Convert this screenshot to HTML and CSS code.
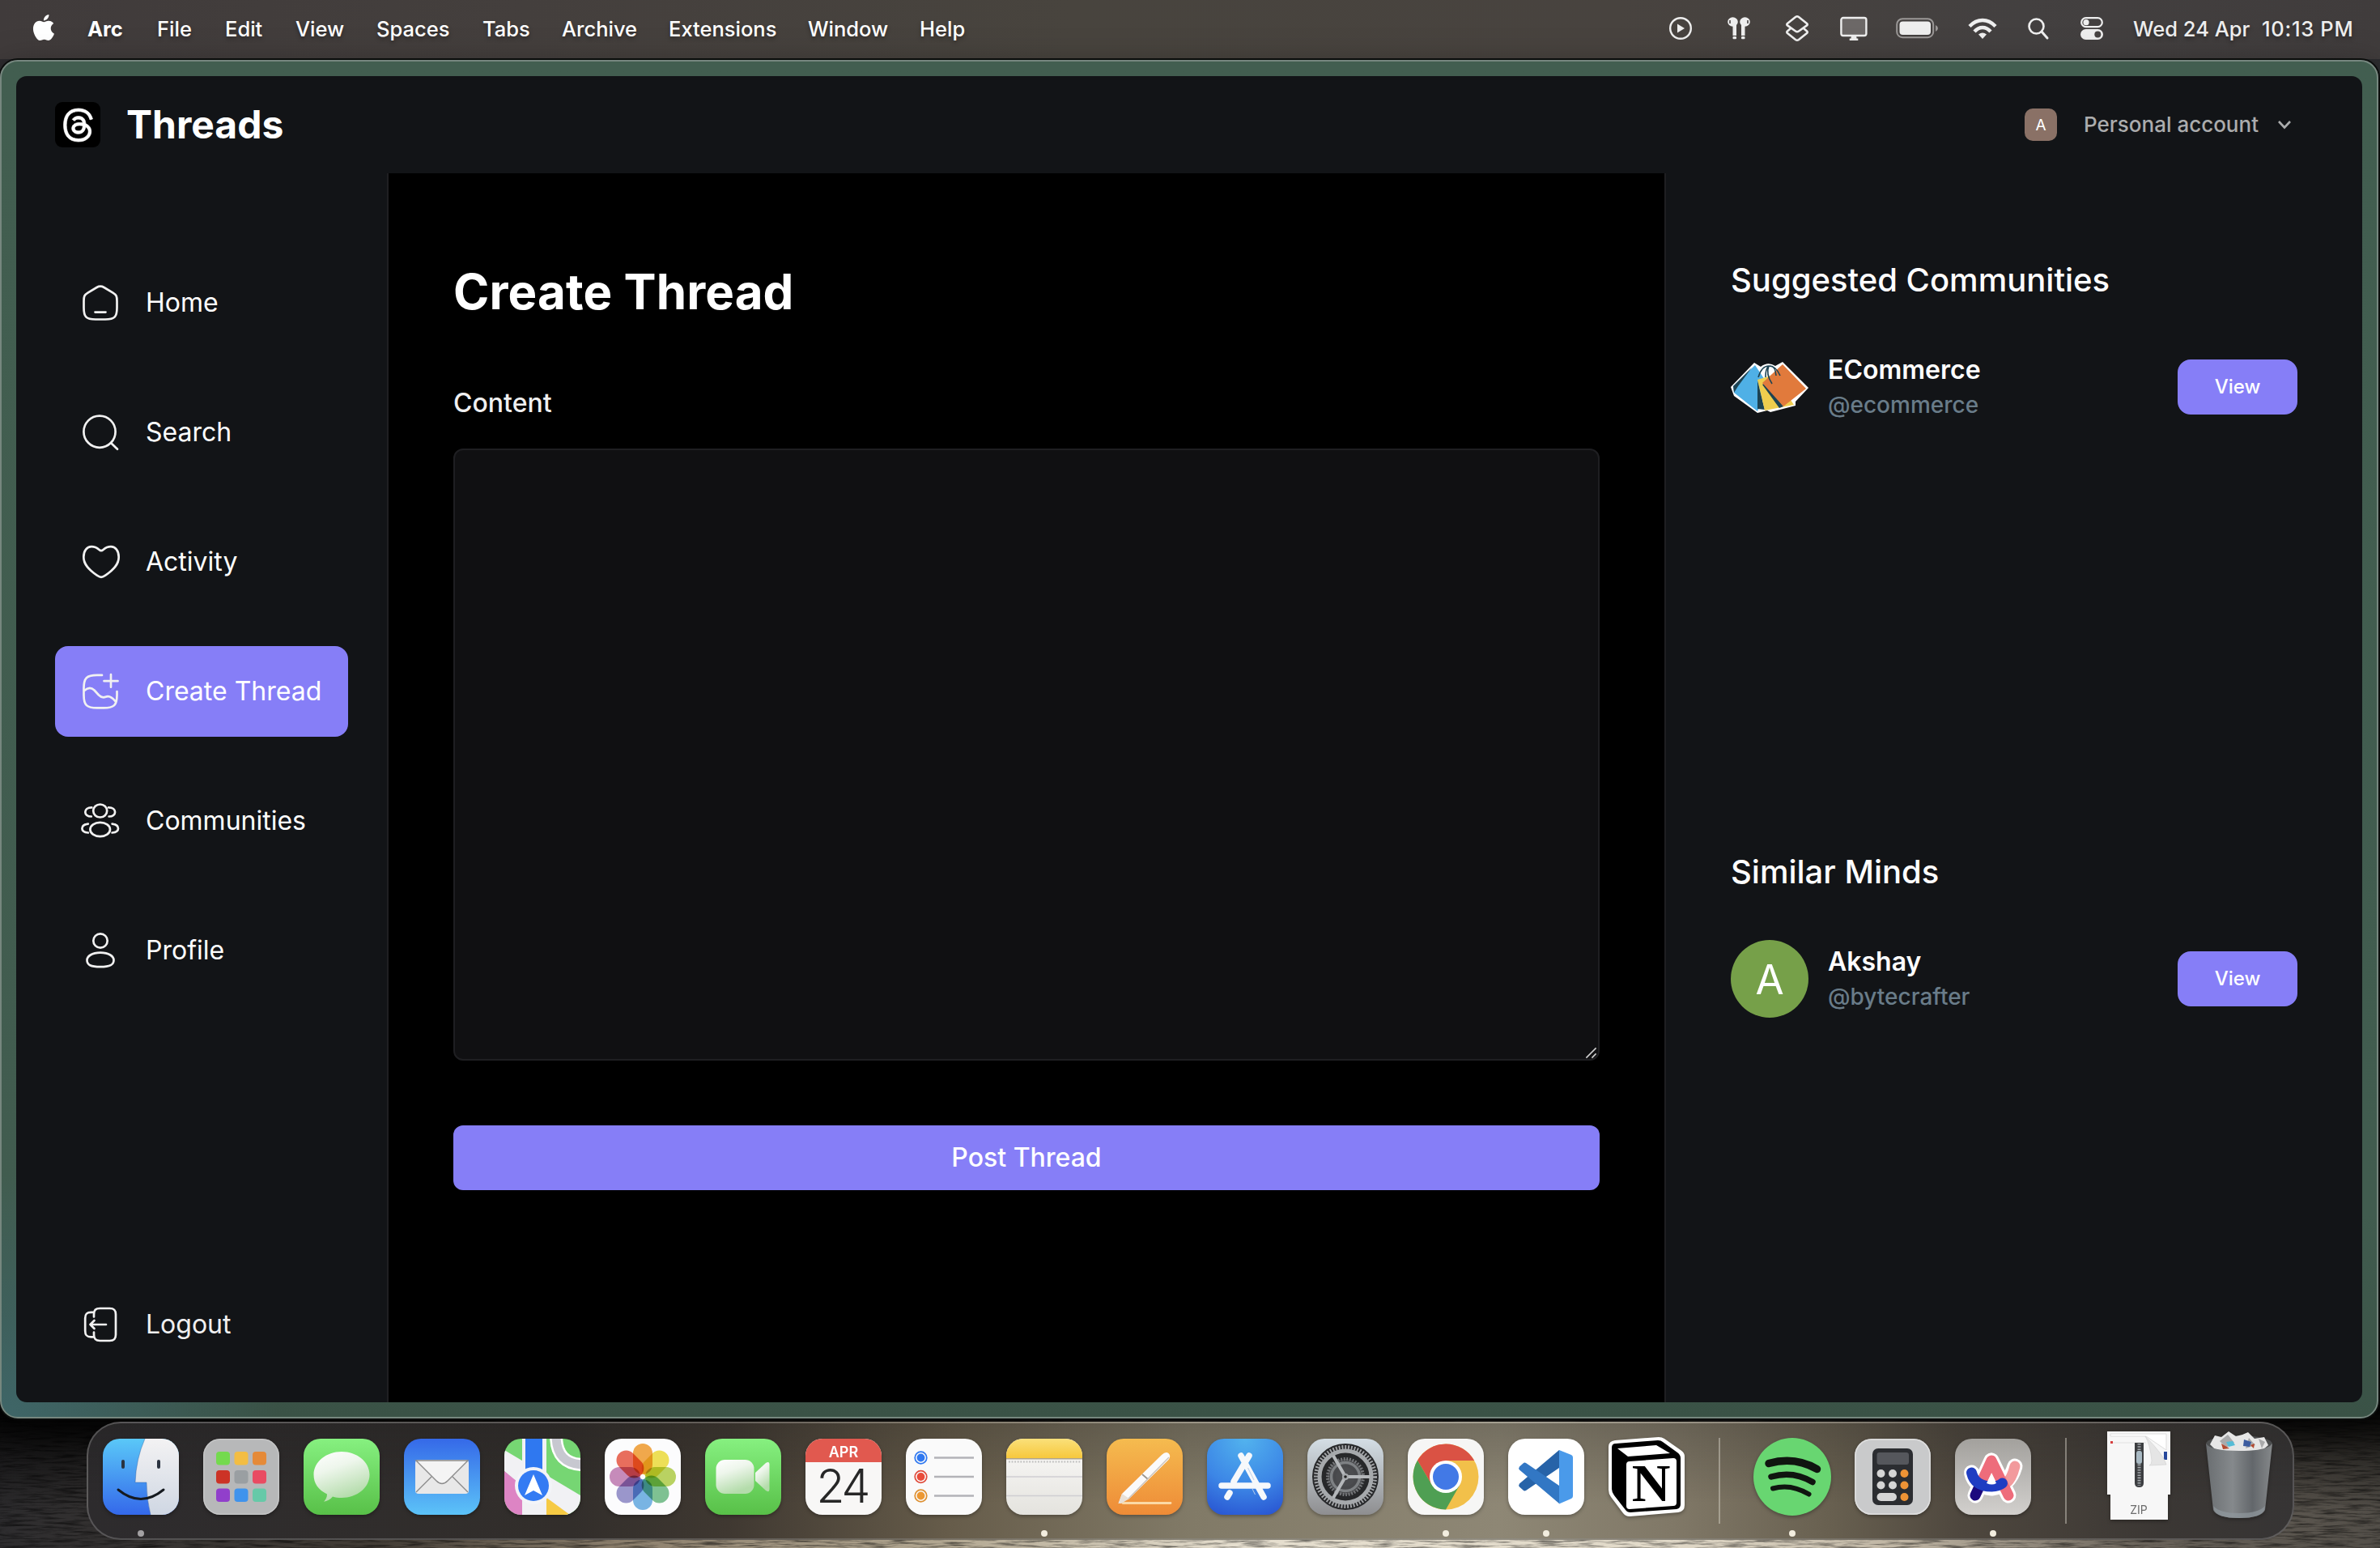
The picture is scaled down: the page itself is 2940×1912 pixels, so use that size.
FILE: index.html
```html
<!DOCTYPE html>
<html lang="en">
<head>
<meta charset="utf-8">
<title>Threads</title>
<link rel="stylesheet" href="styles.css">
</head>
<body>
<div class="desktop">
  <svg class="wallpaper" viewBox="0 0 2940 212" preserveAspectRatio="none">
    <defs>
      <linearGradient id="wood" x1="0" x2="1" y1="0" y2="0">
        <stop offset="0" stop-color="#2d2c2e"/><stop offset=".16" stop-color="#433d36"/><stop offset=".26" stop-color="#8c7f6c"/><stop offset=".4" stop-color="#b3a892"/><stop offset=".52" stop-color="#e6dfcf"/><stop offset=".7" stop-color="#e2dac9"/><stop offset=".8" stop-color="#beb4a2"/><stop offset=".9" stop-color="#6a635a"/><stop offset="1" stop-color="#524e48"/>
      </linearGradient>
      <linearGradient id="woodShade" x1="0" x2="0" y1="0" y2="1">
        <stop offset=".2" stop-color="#000" stop-opacity=".95"/><stop offset=".5" stop-color="#000" stop-opacity=".4"/><stop offset=".8" stop-color="#000" stop-opacity="0"/>
      </linearGradient>
      <filter id="grain" x="0" y="0" width="100%" height="100%">
        <feTurbulence type="fractalNoise" baseFrequency=".03 .35" numOctaves="4" seed="7"/>
        <feColorMatrix values="0 0 0 0 0  0 0 0 0 0  0 0 0 0 0  2.6 0 0 0 -1.1"/>
      </filter>
    </defs>
    <rect width="2940" height="212" fill="url(#wood)"/>
    <rect width="2940" height="212" filter="url(#grain)" opacity=".5"/>
    <rect width="2940" height="212" fill="url(#woodShade)"/>
  </svg>

  <header class="menubar">
    <nav class="menus">
      <svg class="apple" viewBox="0 0 24 24"><path d="M12.152 6.896c-.948 0-2.415-1.078-3.96-1.04-2.04.027-3.91 1.183-4.961 3.014-2.117 3.675-.546 9.103 1.519 12.09 1.013 1.454 2.208 3.09 3.792 3.039 1.52-.065 2.09-.987 3.935-.987 1.831 0 2.35.987 3.96.948 1.637-.026 2.676-1.48 3.676-2.948 1.156-1.688 1.636-3.325 1.662-3.415-.039-.013-3.182-1.221-3.22-4.857-.026-3.04 2.48-4.494 2.597-4.559-1.429-2.09-3.623-2.324-4.39-2.376-2-.156-3.675 1.09-4.61 1.09zM15.53 3.83c.843-1.012 1.4-2.427 1.245-3.83-1.207.052-2.662.805-3.532 1.818-.78.896-1.454 2.338-1.273 3.714 1.338.104 2.715-.688 3.559-1.701"/></svg>
      <span class="app">Arc</span><span>File</span><span>Edit</span><span>View</span><span>Spaces</span><span>Tabs</span><span>Archive</span><span>Extensions</span><span>Window</span><span>Help</span>
    </nav>
    <div class="status">
      <svg class="s-play" viewBox="0 0 30 30"><circle cx="15" cy="15" r="12.8" fill="none" stroke="#eee" stroke-width="2.4"/><path d="M11 9.5v11l9-5.5z" fill="#eee"/></svg>
      <svg class="s-pods" viewBox="0 0 30 30"><g fill="#eee"><ellipse cx="7.5" cy="7" rx="6.3" ry="5.8"/><ellipse cx="22.5" cy="7" rx="6.3" ry="5.8"/><rect x="7.5" y="10" width="4.5" height="14"/><rect x="18" y="10" width="4.5" height="14"/><rect x="7.5" y="25" width="4.5" height="3.2" rx="1"/><rect x="18" y="25" width="4.5" height="3.2" rx="1"/></g><path d="M4 5v4M26 5v4" stroke="#474342" stroke-width="1.6"/></svg>
      <svg class="s-stack" viewBox="0 0 30 34"><g fill="none" stroke="#eee" stroke-width="2.6" stroke-linejoin="round"><path d="M13 3 3 11q-1.400 1.200 0 2.400L13 20.500q2 1.500 4 0l10-7.100q1.400-1.200 0-2.400L17 3q-2-1.500-4 0z"/><path d="M7 17l-4 3.500q-1.400 1.200 0 2.400L13 31q2 1.500 4 0l10-8.100q1.400-1.200 0-2.400L23 17"/></g></svg>
      <svg class="s-display" viewBox="0 0 34 30"><rect x="1.400" y="2" width="31" height="22" rx="2.500" fill="#6c6867" stroke="#eee" stroke-width="2.400"/><path d="M14 24h6l.6 3.500h1.700V30H11.700v-2.500h1.700z" fill="#eee"/></svg>
      <svg class="s-battery" viewBox="0 0 52 26"><rect x="1.200" y="1.200" width="45" height="23" rx="7" fill="none" stroke="#9b9897" stroke-width="2"/><rect x="4.500" y="4.500" width="38.500" height="16.500" rx="4" fill="#eee"/><path d="M49 9q3 1.500 3 4t-3 4z" fill="#9b9897"/></svg>
      <svg class="s-wifi" viewBox="0 0 36 27"><g fill="none" stroke="#eee" stroke-width="4.400"><path d="M2 10.500Q9 3 18 3t16 7.500"/><path d="M8 17q4.500-5 10-5t10 5"/></g><path d="M18 26l-5-5.500q5-4 10 0z" fill="#eee"/></svg>
      <svg class="s-find" viewBox="0 0 26 27"><circle cx="10.500" cy="10.500" r="9" fill="none" stroke="#eee" stroke-width="2.600"/><path d="M17 17l7 8" stroke="#eee" stroke-width="3" stroke-linecap="round"/></svg>
      <svg class="s-cc" viewBox="0 0 28 28"><rect x="1.200" y="1.200" width="25.600" height="11" rx="5.500" fill="none" stroke="#eee" stroke-width="2.200"/><circle cx="7" cy="6.700" r="3.600" fill="#eee"/><rect y="15" width="28" height="13" rx="6.500" fill="#eee"/><circle cx="21.300" cy="21.500" r="4" fill="#474342"/></svg>
      <span class="date">Wed 24 Apr</span><span class="time">10:13 PM</span>
    </div>
  </header>

  <main class="window">
    <div class="page">
      <header class="topbar">
        <div class="brand">
          <span class="logo"><svg viewBox="0 0 24 24"><path d="M12.186 24h-.007c-3.581-.024-6.334-1.205-8.184-3.509C2.35 18.44 1.5 15.586 1.472 12.01v-.017c.03-3.579.879-6.43 2.525-8.482C5.845 1.205 8.6.024 12.18 0h.014c2.746.02 5.043.725 6.826 2.098 1.677 1.29 2.858 3.13 3.509 5.467l-2.04.569c-1.104-3.96-3.898-5.984-8.304-6.015-2.91.022-5.11.936-6.54 2.717C4.307 6.504 3.616 8.914 3.589 12c.027 3.086.718 5.496 2.057 7.164 1.43 1.783 3.631 2.698 6.54 2.717 2.623-.02 4.358-.631 5.8-2.045 1.647-1.613 1.618-3.593 1.09-4.798-.31-.71-.873-1.3-1.634-1.75-.192 1.352-.622 2.446-1.284 3.272-.886 1.102-2.14 1.704-3.73 1.79-1.202.065-2.361-.218-3.259-.801-1.063-.689-1.685-1.74-1.752-2.964-.065-1.19.408-2.285 1.33-3.082.88-.76 2.119-1.207 3.583-1.291a13.853 13.853 0 0 1 3.02.142c-.126-.742-.375-1.332-.75-1.757-.513-.586-1.308-.883-2.359-.89h-.029c-.844 0-1.992.232-2.721 1.32L7.734 7.847c.98-1.454 2.568-2.256 4.478-2.256h.044c3.194.02 5.097 1.975 5.287 5.388.108.046.216.094.321.142 1.49.7 2.58 1.761 3.154 3.07.797 1.82.871 4.79-1.548 7.158-1.85 1.81-4.094 2.628-7.277 2.65Zm1.003-11.69c-.242 0-.487.007-.739.021-1.836.103-2.98.946-2.916 2.143.067 1.256 1.452 1.839 2.784 1.767 1.224-.065 2.818-.543 3.086-3.71a10.5 10.5 0 0 0-2.215-.221z"/></svg></span>
          <span class="brand-name">Threads</span>
        </div>
        <div class="account">
          <span class="account-avatar">A</span>
          <span class="account-name">Personal account</span>
          <svg class="chevron" viewBox="0 0 18 12"><path d="M2 2l7 7.500L16 2"/></svg>
        </div>
      </header>

      <div class="columns">
        <aside class="sidebar">
          <nav class="nav">
            <a class="item"><svg viewBox="0 0 48 48"><path d="M3.500 22c0-6 .5-7.500 5-10.300L19.500 5c3.500-2 5.500-2 9 0l11 6.700c4.500 2.800 5 4.300 5 10.300v8c0 11-2.500 14.500-14.500 14.500H18C6 44.500 3.500 41 3.500 30zM17.500 35.600h13"/></svg><span>Home</span></a>
            <a class="item"><svg viewBox="0 0 48 48"><circle cx="23" cy="23.200" r="19.600"/><path d="M37.500 37.500l7.500 7.200"/></svg><span>Search</span></a>
            <a class="item"><svg class="wide" viewBox="0 0 48 48"><path d="M22.500 9c-3-2.600-6-3.800-9.500-3.800C7.500 5.200 3.300 10 3.300 18c0 9 6 15.500 16.500 22.700 4.200 2.900 6.200 2.900 10.400 0C40.700 33.500 46.700 27 46.700 18c0-8-4.200-12.800-9.700-12.800-3.500 0-6.500 1.200-9.500 3.800-1.900 1.700-3.100 1.700-5 0z"/></svg><span>Activity</span></a>
            <a class="item active"><svg viewBox="0 0 48 48"><path d="M26 3.900h-6C7 3.900 3.500 7.500 3.500 20v8.500C3.500 41 7 44.400 20 44.400h8c13 0 16.500-3.400 16.500-15.900V24M37 3.200v15.500M28.500 11.200h17M4.200 23c4.300-4 8.600-4 12.300-.5l5.500 6c3 3 5 3.800 8.500 2.200 4-1.700 7.500-.2 12 5.500"/></svg><span>Create Thread</span></a>
            <a class="item"><svg viewBox="0 0 48 48"><ellipse cx="23.700" cy="11.500" rx="8.500" ry="8"/><ellipse cx="23.700" cy="34.500" rx="12.300" ry="8.600"/><path d="M13.300 7.300C8 7.300 5.300 10 5.300 13s2.700 5.500 7.500 5.500M34.100 7.300c5.300 0 8 2.700 8 5.700s-2.700 5.500-7.500 5.500M8.800 27.700C4 28.300 1.400 30.500 1.400 33.200s2.600 4.800 7.400 5.300M38.600 27.700c4.800.6 7.400 2.800 7.400 5.500s-2.600 4.800-7.400 5.300"/></svg><span>Communities</span></a>
            <a class="item"><svg viewBox="0 0 48 48"><circle cx="24" cy="12" r="8.700"/><path d="M24 26.700c10.500 0 16.500 4.300 16.500 9.300 0 5.700-4.500 8.200-16.500 8.200S7.500 41.700 7.500 36c0-5 6-9.300 16.500-9.300z"/></svg><span>Profile</span></a>
          </nav>
          <a class="item logout"><svg viewBox="0 0 48 48"><path d="M16 14.500V11.500C16 6 18 4 23.500 4h12c5.500 0 7.500 2 7.500 7.500v25c0 5.500-2 7.500-7.500 7.500h-12C18 44 16 42 16 36.500v-3M16 8.800h-3.500c-5.500 0-7.300 2-7.300 7.500v15.500c0 5.500 1.800 7.500 7.300 7.500H16M31 24H11.500M16.500 19l-5 5 5 5"/></svg><span>Logout</span></a>
        </aside>

        <section class="main">
          <h1>Create Thread</h1>
          <label class="label" for="content">Content</label>
          <div class="field">
            <textarea id="content" class="editor"></textarea>
            <svg class="grip" viewBox="0 0 16 16"><path d="M1.500 14.500l13-13M9 14.500L14.500 9"/></svg>
          </div>
          <button class="post">Post Thread</button>
        </section>

        <aside class="rightbar">
          <section class="suggest">
            <h2>Suggested Communities</h2>
            <div class="card">
              <svg class="avatar" viewBox="0 0 96 96"><path d="M0 48 29 18l8 5q9-7 18-1l9-5 32 32-16 17v5L49 79l-4-2-12 3L4 59z" fill="#fff"/><path d="M3 47 30 21l16 24-13 33L4 55z" fill="#4fb0e6"/><path d="M3 47 26 24 9 47 4 55z" fill="#1d4353"/><path d="M33 40l9 36-9-1z" fill="#1d4353"/><path d="M33 39l20-6 25 37-36 7z" fill="#efce4e"/><path d="M39 45l4-2 22 29-5 2z" fill="#1d4353"/><path d="M39 43 64 20l29 30-28 22z" fill="#e17a3c"/><ellipse cx="47" cy="27" rx="6" ry="5" fill="#fff"/><path d="M34 36q4-14 13-14t14 12M43 36q0-14 6-14t7 12M51 44q-8-12-4-22" fill="none" stroke="#1d4353" stroke-width="1.600"/></svg>
              <div class="who"><strong>ECommerce</strong><span>@ecommerce</span></div>
              <button class="view">View</button>
            </div>
          </section>
          <section class="suggest">
            <h2>Similar Minds</h2>
            <div class="card">
              <span class="avatar letter">A</span>
              <div class="who"><strong>Akshay</strong><span>@bytecrafter</span></div>
              <button class="view">View</button>
            </div>
          </section>
        </aside>
      </div>
    </div>
  </main>

  <footer class="dock">
    <div class="cell running">
      <svg viewBox="0 0 94 94"><defs><linearGradient id="fb" x2="0" y2="1"><stop stop-color="#5ac8f8"/><stop offset="1" stop-color="#3468ea"/></linearGradient><linearGradient id="fw" x2="0" y2="1"><stop stop-color="#f3f2f3"/><stop offset="1" stop-color="#cfd7e3"/></linearGradient><clipPath id="sq"><rect width="94" height="94" rx="21"/></clipPath></defs><g clip-path="url(#sq)"><path d="M0 0h94v94H0z" fill="url(#fb)"/><path d="M52 0Q41 25 40 54h14q0 20 5 40h35V0z" fill="url(#fw)"/><path d="M52 0Q41 25 40 54h14q0 20 5 40" fill="none" stroke="#2b5a9a" stroke-width=".8" opacity=".5"/></g><path d="M25 28v7M69 28v7" stroke="#2a3340" stroke-width="4" stroke-linecap="round"/><path d="M19 63q28 23 56 0" fill="none" stroke="#151a20" stroke-width="3" stroke-linecap="round"/></svg>
    </div>
    <div class="cell">
      <svg viewBox="0 0 94 94"><rect width="94" height="94" rx="21" fill="#b7b8b9"/><rect x=".8" y=".8" width="92.400" height="92.400" rx="20" fill="none" stroke="#cfcfcf" stroke-opacity=".6" stroke-width="1.500"/>
      <g><rect x="16" y="16" width="17" height="16.500" rx="4" fill="#74da4e"/><rect x="38.500" y="16" width="17" height="16.500" rx="4" fill="#f3bd43"/><rect x="61" y="16" width="17" height="16.500" rx="4" fill="#e58a38"/><rect x="16" y="39" width="17" height="16.500" rx="4" fill="#cc3326"/><rect x="38.500" y="39" width="17" height="16.500" rx="4" fill="#9a9fa2"/><rect x="61" y="39" width="17" height="16.500" rx="4" fill="#e94b62"/><rect x="16" y="61.500" width="17" height="16.500" rx="4" fill="#913fcb"/><rect x="38.500" y="61.500" width="17" height="16.500" rx="4" fill="#3f93ec"/><rect x="61" y="61.500" width="17" height="16.500" rx="4" fill="#66c9a8"/></g></svg>
    </div>
    <div class="cell">
      <svg viewBox="0 0 94 94"><defs><linearGradient id="gr" x2="0" y2="1"><stop stop-color="#86f080"/><stop offset="1" stop-color="#58c048"/></linearGradient><linearGradient id="bub" x2=".4" y2="1"><stop stop-color="#fff"/><stop offset=".4" stop-color="#eef6ec"/><stop offset="1" stop-color="#b4dcab"/></linearGradient></defs><rect width="94" height="94" rx="21" fill="url(#gr)"/><path d="M47 16c19 0 34.500 12.500 34.500 28.500S66 73 47 73c-4 0-8-.5-11-1.600-3 3.600-7 5.600-11 6.300 2.600-2.700 4-5.400 4-9.200C18 63 12.500 55 12.500 44.500 12.500 28.500 28 16 47 16z" fill="url(#bub)"/></svg>
    </div>
    <div class="cell">
      <svg viewBox="0 0 94 94"><defs><linearGradient id="ml" x2="0" y2="1"><stop stop-color="#3569e8"/><stop offset="1" stop-color="#5cc3f8"/></linearGradient></defs><rect width="94" height="94" rx="21" fill="url(#ml)"/><rect x="14" y="26" width="66" height="42" rx="4" fill="#e8e8e8"/><path d="M15 66l19-19M79 66L60 47" stroke="#888" stroke-width="1.300"/><path d="M15 27l25 25q7 7 14 0l25-25z" fill="#f4f4f4" stroke="#8b8b8b" stroke-width="1.400"/></svg>
    </div>
    <div class="cell">
      <svg viewBox="0 0 94 94"><g clip-path="url(#sq)"><path d="M0 0h94v94H0z" fill="#76d673"/><path d="M0 14v26l60 54h34V70z" fill="#f1f1f4"/><path d="M0 40l22 18v36H0z" fill="#dd84c4"/><path d="M51 72l30 22H51z" fill="#f6ca44"/><path d="M22 0h30v94H22z" fill="#f1f1f4"/><path d="M26 0h21v50H26z" fill="#2f78f0"/><path d="M64-4q0 36 34 36" fill="none" stroke="#fff" stroke-width="16"/><path d="M64-4q0 36 34 36" fill="none" stroke="#c7c8d0" stroke-width="11"/></g><circle cx="36" cy="58" r="23" fill="#f3f4f8"/><circle cx="36" cy="58" r="19" fill="#347bf3"/><path d="M36 44l11 26-11-6-11 6z" fill="#fff"/></svg>
    </div>
    <div class="cell">
      <svg class="petals" viewBox="0 0 94 94"><rect width="94" height="94" rx="21" fill="#fcfcfd"/><g><rect x="35" y="6" width="24" height="38" rx="12" fill="#f2a33c"/><rect x="35" y="6" width="24" height="38" rx="12" fill="#efe04a" transform="rotate(45 47 47)"/><rect x="35" y="6" width="24" height="38" rx="12" fill="#b5d256" transform="rotate(90 47 47)"/><rect x="35" y="6" width="24" height="38" rx="12" fill="#74bf8a" transform="rotate(135 47 47)"/><rect x="35" y="6" width="24" height="38" rx="12" fill="#6fb0e3" transform="rotate(180 47 47)"/><rect x="35" y="6" width="24" height="38" rx="12" fill="#948fc9" transform="rotate(225 47 47)"/><rect x="35" y="6" width="24" height="38" rx="12" fill="#c583b6" transform="rotate(270 47 47)"/><rect x="35" y="6" width="24" height="38" rx="12" fill="#ea6350" transform="rotate(315 47 47)"/></g></svg>
    </div>
    <div class="cell">
      <svg viewBox="0 0 94 94"><rect width="94" height="94" rx="21" fill="url(#gr)"/><rect x="13.500" y="26" width="47" height="42" rx="11" fill="url(#bub)"/><path d="M62 42l13-12q4.500-3 4.500 2v30q0 5-4.500 2L62 52z" fill="url(#bub)"/></svg>
    </div>
    <div class="cell">
      <svg viewBox="0 0 94 94"><g clip-path="url(#sq)"><path d="M0 0h94v94H0z" fill="#f8f7f6"/><path d="M0 0h94v29H0z" fill="#e1594f"/></g><text x="47" y="22.500" class="cal-month">APR</text><text x="45.500" y="79" class="cal-day">24</text></svg>
    </div>
    <div class="cell">
      <svg viewBox="0 0 94 94"><rect width="94" height="94" rx="21" fill="#fafafa"/><g stroke="#b3b3b8" stroke-width="2.400"><path d="M35 23.500h49M35 47h49M35 70.500h49"/></g><g fill="none" stroke-width="1.700"><circle cx="18.500" cy="23.500" r="7.300" stroke="#2f78f0"/><circle cx="18.500" cy="47" r="7.300" stroke="#e04c3c"/><circle cx="18.500" cy="70.500" r="7.300" stroke="#dd9033"/></g><circle cx="18.500" cy="23.500" r="4.900" fill="#2f78f0"/><circle cx="18.500" cy="47" r="4.900" fill="#e94c3a"/><circle cx="18.500" cy="70.500" r="4.900" fill="#ec9833"/></svg>
    </div>
    <div class="cell running">
      <svg viewBox="0 0 94 94"><defs><linearGradient id="nt" x2="0" y2="1"><stop stop-color="#fae07a"/><stop offset="1" stop-color="#f7c83c"/></linearGradient><linearGradient id="np" x2="0" y2="1"><stop stop-color="#fbfaf9"/><stop offset="1" stop-color="#e4e3de"/></linearGradient></defs><g clip-path="url(#sq)"><path d="M0 0h94v94H0z" fill="url(#np)"/><path d="M0 0h94v24H0z" fill="url(#nt)"/><path d="M0 24.700h94" stroke="#b0a58c" stroke-width="1.500"/><path d="M3 28.500h90" stroke="#bdbdbd" stroke-width="1.800" stroke-dasharray="1.800 1.800"/><path d="M0 47h94M0 70.500h94" stroke="#cfced2" stroke-width="1.600"/></g></svg>
    </div>
    <div class="cell">
      <svg viewBox="0 0 94 94"><defs><linearGradient id="pg" x2="0" y2="1"><stop stop-color="#f5bb4f"/><stop offset="1" stop-color="#ee8b37"/></linearGradient></defs><rect width="94" height="94" rx="21" fill="url(#pg)"/><path d="M20 79.500h59" stroke="#fbd9a6" stroke-width="2.800" stroke-linecap="round"/><path d="M14.500 80L19 68 68 20q5-5 8.500-2t0 8L28 74z" fill="#fbfafa"/><path d="M19 68l9 6-10 6-3.500 0z" fill="#e9e0d6"/><path d="M44 44l7 6" stroke="#9a948c" stroke-width="1.800"/><path d="M77 23L27 74" stroke="#c9c2bb" stroke-width="1.400"/></svg>
    </div>
    <div class="cell">
      <svg viewBox="0 0 94 94"><defs><radialGradient id="as" cx=".5" cy="0" r="1.050"><stop stop-color="#52b3ee"/><stop offset=".6" stop-color="#3c86e6"/><stop offset="1" stop-color="#2a58d3"/></radialGradient></defs><rect width="94" height="94" rx="21" fill="url(#as)"/><g stroke="#f6f8fb" stroke-width="7.500" stroke-linecap="round"><path d="M52 21L33 53M42 21l28 51M28 67l-3 5M18 58h57"/></g><path d="M50.500 36L58 51M56 62l3.500 7" stroke="#b9cfee" stroke-width="1" /></svg>
    </div>
    <div class="cell">
      <svg viewBox="0 0 94 94"><defs><linearGradient id="st" x2="0" y2="1"><stop stop-color="#d4dee5"/><stop offset="1" stop-color="#8e8e90"/></linearGradient></defs><rect width="94" height="94" rx="21" fill="url(#st)"/><circle cx="47" cy="47" r="41" fill="#27282a"/><circle cx="47" cy="47" r="36.500" fill="none" stroke="#a2a4a7" stroke-width="5" stroke-dasharray="1.900 1.900"/><circle cx="47" cy="47" r="32" fill="none" stroke="#a6a9ac" stroke-width="5"/><circle cx="47" cy="47" r="22" fill="#48494c" stroke="#77797c" stroke-width="4" stroke-dasharray="1.800 1.800"/><circle cx="47" cy="47" r="17.500" fill="none" stroke="#7d8083" stroke-width="3.500"/><circle cx="47" cy="47" r="12" fill="#4b4c4f"/><path d="M47 47h30M47 47L32 21M47 47L32 73" stroke="#b4b7ba" stroke-width="4"/><circle cx="47" cy="47" r="4" fill="#a6a9ac"/><circle cx="47" cy="47" r="1.800" fill="#222"/></svg>
    </div>
    <div class="cell running">
      <svg viewBox="0 0 94 94"><rect width="94" height="94" rx="21" fill="#f6f6f5"/><circle cx="47" cy="47" r="40.500" fill="#f2c04a"/><path d="M47 27h35.200A40.500 40.500 0 0 0 12 26.700L29.700 57z" fill="#da5244"/><path d="M12 26.700A40.500 40.500 0 0 0 47 87.500L64.300 57 29.700 57z" fill="#4f9f53"/><circle cx="47" cy="47" r="20" fill="#fff"/><circle cx="47" cy="47" r="16" fill="#4279e6"/></svg>
    </div>
    <div class="cell running">
      <svg viewBox="0 0 94 94"><rect width="94" height="94" rx="21" fill="#fff"/><path d="M63 14v22L22 64q-2 1-3.500-.5l-4.500-4q-1.500-2 0-4z" fill="#2763a8"/><path d="M63 80V58L22 30q-2-1-3.500.5l-4.500 4q-1.500 2 0 4z" fill="#3277c4"/><path d="M63 14l15 6q2 1 2 3v48q0 2-2 3l-15 6.500z" fill="#4a9aea"/></svg>
    </div>
    <div class="cell">
      <svg class="notion" viewBox="0 0 94 98"><path d="M8 4L62 0q4 0 7 2l20 14q5 3 5 8v60q0 8-8 9L26 98q-5 0-8-4L3 74q-3-4-3-9V12q0-7 8-8z" fill="#fff"/><path d="M9 8l52-4q4 0 6 2l18 13q4 3 4 7v57q0 5-5 6l-57 4q-4 0-6-3L7 72q-3-4-3-8V13q0-5 5-5z" fill="#000"/><path d="M11 14l48-4 17 10-52 4z" fill="#fff"/><path d="M26 30l54-4q4 0 4 4v51q0 4-4 4l-54 4q-4 0-4-4V34q0-4 4-4z" fill="#fff"/><text x="52.500" y="78.500" class="n-letter">N</text></svg>
    </div>
    <div class="divider"></div>
    <div class="cell running">
      <svg class="spotify" viewBox="0 0 96 96"><circle cx="48" cy="48" r="48" fill="#68d671"/><g fill="none" stroke="#101510" stroke-linecap="round"><path d="M19 31.500q32-9 59.500 7" stroke-width="9.500"/><path d="M22 48q27-8 51 6.500" stroke-width="7.500"/><path d="M24 62.500q22-6.500 44.500 7" stroke-width="6"/></g></svg>
    </div>
    <div class="cell">
      <svg viewBox="0 0 94 94"><rect width="94" height="94" rx="21" fill="#c9cacb"/><rect x="1" y="1" width="92" height="92" rx="20" fill="none" stroke="#dedede" stroke-width="1.500"/><rect x="22" y="12" width="50" height="70" rx="7" fill="#2b2d31"/><rect x="27.500" y="17" width="39.500" height="15" rx="3" fill="#55575c"/><g fill="#d5d5d5"><circle cx="32.500" cy="43" r="5"/><circle cx="47" cy="43" r="5"/><circle cx="32.500" cy="57.500" r="5"/><circle cx="47" cy="57.500" r="5"/><rect x="27.500" y="67" width="24.500" height="10" rx="5"/></g><g fill="#ee9335"><circle cx="61.500" cy="43" r="5"/><circle cx="61.500" cy="57.500" r="5"/><circle cx="61.500" cy="72" r="5"/></g></svg>
    </div>
    <div class="cell running">
      <svg viewBox="0 0 94 94"><defs><linearGradient id="ar" x2="0" y2="1"><stop stop-color="#a3a19d"/><stop offset="1" stop-color="#d2d0cd"/></linearGradient></defs><rect width="94" height="94" rx="21" fill="url(#ar)"/><g fill="none" stroke-linecap="round"><g stroke="#fff" stroke-width="19"><path d="M25 70l20-43M45 27l21 43M20.500 42q4 17 25 19Q67 58 74 34"/></g><path d="M74 34Q70 50 63 55" stroke="#f29a9c" stroke-width="13"/><path d="M25 70l7-15" stroke="#1c0a7e" stroke-width="13"/><path d="M33 53l12-26 21 43" stroke="#ee6c7b" stroke-width="13" stroke-linejoin="round"/><path d="M20.500 42q4 17 25 17 8 0 13-4" stroke="#1f3dc2" stroke-width="13"/></g><path d="M45 43l-6 12q7 3 12 0z" fill="#fff"/></svg>
    </div>
    <div class="divider"></div>
    <div class="cell">
      <svg class="zip" viewBox="0 0 78 110"><path d="M0 0h78v78h-3v31H4V78H0z" fill="#f7f7f7"/><path d="M4 3h69v20L48 6H4z" fill="#fff" stroke="#ddd"/><path d="M4 14h44" stroke="#e3e3e3"/><rect x="4" y="12" width="3" height="3" fill="#d64040"/><path d="M70 25h4v10h-4z" fill="#27489b"/><path d="M47 6q6 10 8 30 0 5-3 6l21-1q-3-12-26-35z" fill="#e5e5e5" stroke="#cfcfcf" stroke-width=".6"/><path d="M34 14h11v50q0 5-5.500 5T34 64z" fill="#3c3e41"/><path d="M39.500 15v52" stroke="#a3a8ac" stroke-width="4" stroke-dasharray="1.600 1.600"/><rect x="36" y="24" width="7" height="16" rx="3" fill="#a9bac4"/><text x="39" y="102" class="zip-text">ZIP</text></svg>
    </div>
    <div class="cell">
      <svg class="trash" viewBox="0 0 84 108"><defs><linearGradient id="tr" x2="1" y2="0"><stop stop-color="#6a6e71"/><stop offset=".4" stop-color="#85898c"/><stop offset=".7" stop-color="#63676b"/><stop offset="1" stop-color="#85888a"/></linearGradient></defs><ellipse cx="42" cy="15" rx="41" ry="10" fill="#4b4d4e"/><path d="M6 16L12 5l8 2 9-7 9 6 8-2 7-3 8 8 12-2 5 10-8 7H14z" fill="#e6e6e6"/><path d="M18 12l10-8 8 10-10 6zM54 8l8 9-12 4zM66 9l8 4-4 8z" fill="#a9aaab"/><path d="M26 13l8-1 3 5-8 2z" fill="#55bcd6"/><path d="M48 10l9 3-2 6-8-1z" fill="#3c5c9f"/><path d="M20 15l10 6-8 1zM56 17l5-2-1 6z" fill="#b4492f"/><path d="M1 15q6 9 41 9t41-9l-9 82q-4 10-32 10T10 97z" fill="url(#tr)"/><path d="M10 92q8 9 32 9t32-9l-1 5q-4 10-31 10T11 97z" fill="#90989e" opacity=".7"/></svg>
    </div>
  </footer>
</div>
</body>
</html>
```

FILE: styles.css
```css
* { box-sizing: border-box; margin: 0; padding: 0; }
body { width: 2940px; height: 1912px; overflow: hidden; background: #0a0a0a; font-family: Inter, "Liberation Sans", sans-serif; color: #fff; }
svg { display: block; flex: none; overflow: visible; }
.desktop { position: relative; width: 2940px; height: 1912px; display: flex; flex-direction: column; background: linear-gradient(90deg, #2d2b2e, #0a0a0a 10%, #0a0a0a 90%, #2d2d30); }
.wallpaper { position: absolute; left: 0; bottom: 0; width: 2940px; height: 212px; }

/* menu bar */
.menubar { height: 73px; flex: none; display: flex; justify-content: space-between; padding: 0 33px 3px 41px; background: linear-gradient(90deg, #403b3b, #443f3d 22%, #48443e 45%, #48433f 68%, #434040 85%, #403c3c); font-size: 25.500px; font-weight: 500; text-shadow: 0 3px 5px rgba(0,0,0,.35); }
.menus { display: grid; grid-template-columns: 67px 86px 84px 87px 100px 131px 98px 132px 172px 138px 60px; align-items: center; white-space: nowrap; }
.apple { width: 32px; height: 32px; margin-left: -3px; margin-top: -3px; fill: #fff; }
.app { font-weight: 700; }
.status { display: flex; align-items: center; color: #eee; white-space: nowrap; }
.s-play { width: 30px; height: 30px; margin-right: 42px; }
.s-pods { width: 30px; height: 30px; margin-right: 42px; }
.s-stack { width: 30px; height: 34px; margin-right: 38px; }
.s-display { width: 34px; height: 30px; margin-right: 35px; }
.s-battery { width: 52px; height: 26px; margin-right: 37px; }
.s-wifi { width: 36px; height: 27px; margin-right: 38px; }
.s-find { width: 26px; height: 27px; margin-right: 39px; }
.s-cc { width: 28px; height: 28px; margin-right: 37px; }
.date { width: 159px; }
.time { width: 113px; letter-spacing: .7px; }

/* browser window */
.window { width: 2938px; height: 1678px; flex: none; position: relative; padding: 18px; margin-top: 1px; border: 2px solid #76877f; border-radius: 22px; background: radial-gradient(ellipse 340px 300px at 0 100%, #3f6668, transparent), linear-gradient(180deg, #425e50, #415c4f 85%, #3a5246); box-shadow: 0 0 0 2px #0b0d0c, 0 20px 50px rgba(0,0,0,.6); }
.page { height: 1638px; display: flex; flex-direction: column; background: #121417; border-radius: 13px; overflow: hidden; }
.topbar { height: 120px; flex: none; display: flex; align-items: center; justify-content: space-between; padding: 0 87px 0 48px; }
.brand { display: flex; align-items: center; gap: 32px; }
.logo { width: 56px; height: 56px; border-radius: 9px; background: #000; display: grid; place-items: center; }
.logo svg { width: 41px; height: 41px; fill: #fff; stroke: #fff; stroke-width: .4; }
.brand-name { font-size: 48px; font-weight: 700; line-height: 64px; letter-spacing: 0; margin-top: -1px; }
.account { display: flex; align-items: center; }
.account-avatar { width: 40px; height: 40px; border-radius: 10px; background: #8a7166; display: grid; place-items: center; font-size: 19px; }
.account-name { margin-left: 33px; margin-top: -1px; font-size: 26px; font-weight: 500; color: #abacad; }
.chevron { width: 18px; height: 12px; margin-left: 23px; fill: none; stroke: #abacad; stroke-width: 2.600; }

.columns { flex: 1; display: grid; grid-template-columns: 460px 1576px 862px; }
.sidebar { border-right: 2px solid #1f1f22; padding: 104px 48px 40px; display: flex; flex-direction: column; justify-content: space-between; }
.nav { display: flex; flex-direction: column; gap: 48px; }
.item { width: 362px; height: 112px; padding: 0 32px; display: flex; align-items: center; gap: 32px; border-radius: 16px; font-size: 32px; font-weight: 400; white-space: nowrap; }
.item span { padding-bottom: 2px; }
.item svg { width: 48px; height: 48px; fill: none; stroke: #f1f1f1; stroke-width: 2.700; stroke-linecap: round; stroke-linejoin: round; }
.item.active { background: #867ef7; }
.logout { color: #efeff0; }

.main { background: #000; padding: 106px 80px 0; display: flex; flex-direction: column; }
.main h1 { font-size: 60px; font-weight: 700; line-height: 80px; letter-spacing: .1px; }
.label { margin-top: 76px; font-size: 32px; font-weight: 500; line-height: 44px; color: #efeff0; }
.field { position: relative; margin-top: 34px; height: 756px; }
.editor { display: block; width: 100%; height: 756px; resize: none; background: #101012; border: 2px solid #1f1f22; border-radius: 12px; outline: 0; }
.grip { position: absolute; right: 3px; bottom: 2px; width: 15px; height: 15px; fill: none; stroke: #cfcfcf; stroke-width: 1.700; }
.post { margin-top: 80px; height: 80px; padding-bottom: 2px; border: 0; border-radius: 12px; background: #867ef7; color: #fff; font: 500 32px Inter, sans-serif; }

.rightbar { border-left: 2px solid #1f1f22; padding: 106px 80px 0; display: flex; flex-direction: column; }
.suggest { height: 731px; }
.suggest + .suggest { height: auto; }
.suggest h2 { font-size: 40px; font-weight: 500; line-height: 52px; white-space: nowrap; }
.card { margin-top: 58px; height: 96px; display: flex; align-items: center; width: 700px; }
.avatar { width: 96px; height: 96px; flex: none; }
.letter { border-radius: 50%; background: #76a049; display: grid; place-items: center; font-size: 51px; }
.who { margin-left: 24px; flex: 1; display: flex; flex-direction: column; padding-top: 2px; }
.who strong { font-size: 32px; font-weight: 600; line-height: 42px; }
.who span { font-size: 28px; font-weight: 500; line-height: 44px; color: #697c89; }
.view { width: 148px; height: 68px; padding-bottom: 1px; border: 0; border-radius: 16px; background: #867ef7; color: #fff; font: 500 24px Inter, sans-serif; }

/* dock */
.dock { position: absolute; left: 107px; top: 1756px; width: 2727px; height: 146px; padding: 0 3px; display: flex; border: 2px solid rgba(255,255,255,.2); border-radius: 42px; background: linear-gradient(180deg, rgba(20,20,20,.22), rgba(20,20,20,0) 70%), linear-gradient(90deg, #2d2b2d, #322e2b 22%, #3f3831 29%, #665c4a 39%, #817a67 50%, #8e8775 64%, #807867 72%, #686050 79%, #4e473e 85%, #3b3734 94%, #363434); }
.cell { width: 124px; height: 142px; flex: none; position: relative; display: flex; justify-content: center; padding-top: 19px; }
.cell svg { width: 94px; height: 94px; filter: drop-shadow(0 2px 2px rgba(0,0,0,.3)); }
.cell.running::after { content: ""; position: absolute; left: 58px; top: 132px; width: 8px; height: 8px; border-radius: 50%; background: #f2eddf; }
.cell.running:first-child::after { background: #a3a1a3; }
.petals g rect { mix-blend-mode: multiply; opacity: .92; }
.cell .notion { height: 98px; margin-top: -2px; }
.cell .spotify { width: 96px; height: 96px; margin-top: -1px; }
.cell .zip { width: 78px; height: 110px; margin-top: -9px; }
.cell .trash { width: 84px; height: 108px; margin-top: -9px; }
.divider { width: 56px; flex: none; display: flex; justify-content: center; padding-top: 18px; }
.divider::before { content: ""; width: 2px; height: 106px; background: rgba(220,215,205,.45); }
.cal-month { font: 600 18px Inter, sans-serif; text-anchor: middle; fill: #fff; }
.cal-day { font: 300 57px Inter, sans-serif; text-anchor: middle; fill: #272727; letter-spacing: -3px; }
.n-letter { font: 700 66px "Liberation Serif", serif; text-anchor: middle; fill: #000; }
.zip-text { font: 400 14px Inter, sans-serif; text-anchor: middle; fill: #6c6c6c; }
```
